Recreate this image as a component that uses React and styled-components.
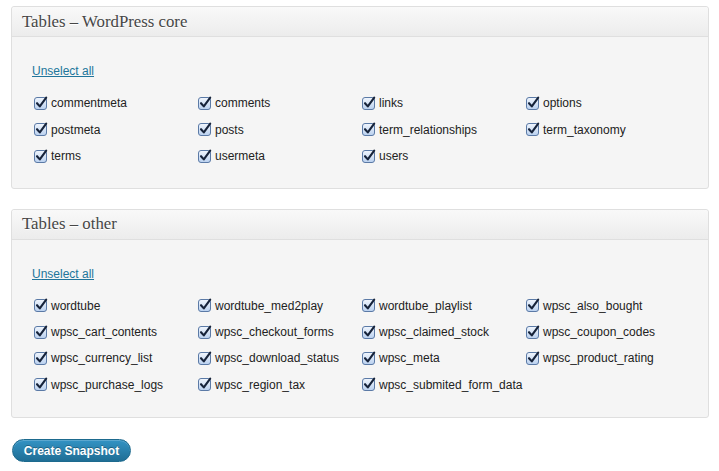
import React from "react";
import styled, { createGlobalStyle } from "styled-components";

const Global = createGlobalStyle`
  html, body { margin: 0; padding: 0; background: #ffffff; }
  body { font-family: "Liberation Sans", Arial, sans-serif; font-size: 12px; color: #333; }
`;

const Page = styled.div`
  padding: 6px 10px 0 11px;
  width: 719px;
  box-sizing: border-box;
`;

const Panel = styled.section`
  border: 1px solid #dfdfdf;
  border-radius: 3px;
  background: #f5f5f5;
  margin-bottom: 20px;
  box-shadow: inset 0 1px 0 #fff;
`;

const PanelHeader = styled.h3`
  margin: 0;
  height: 29px;
  display: flex;
  align-items: center;
  padding: 0 10px;
  border-bottom: 1px solid #dfdfdf;
  background: linear-gradient(to bottom, #f9f9f9, #ececec);
  border-radius: 3px 3px 0 0;
  font-family: "Liberation Serif", Georgia, serif;
  font-weight: normal;
  font-size: 16.8px;
  color: #464646;
  text-shadow: 0 1px 0 #fff;
`;

const PanelBody = styled.div`
  padding: ${(p) => p.$top}px 20px ${(p) => p.$bottom}px 20px;
`;

const Link = styled.a`
  display: block;
  line-height: 18px;
  color: #21759b;
  text-decoration: underline;
  font-size: 12px;
  width: max-content;
  cursor: pointer;
  margin-bottom: 10px;
`;

const Grid = styled.div`
  display: grid;
  grid-template-columns: repeat(4, 164px);
  grid-auto-rows: ${(p) => p.$row}px;
`;

const Item = styled.label`
  display: flex;
  align-items: center;
  gap: 3px;
  padding-left: 2px;
  font-size: 12px;
  color: #222;
  white-space: nowrap;
`;

const Box = styled.svg`
  width: 14px;
  height: 14px;
  flex: none;
  margin-top: -1px;
`;

const Check = () => (
  <Box viewBox="0 0 14 14">
    <defs>
      <linearGradient id="cbg" x1="0" y1="0" x2="0" y2="1">
        <stop offset="0" stopColor="#f1f6fd" />
        <stop offset="1" stopColor="#b9d0ef" />
      </linearGradient>
    </defs>
    <rect x="0.5" y="1.5" width="12" height="12" rx="2.5" fill="url(#cbg)" stroke="#5b7aa6" />
    <path d="M3 7.2 L5.8 10.4 L12.2 1.6" fill="none" stroke="#16233a" strokeWidth="2.1" strokeLinecap="round" strokeLinejoin="round" />
  </Box>
);

const Button = styled.button`
  margin: 1px 0 0 1px;
  height: 23px;
  width: 119px;
  padding: 0;
  border: 1px solid #1d6a8e;
  border-radius: 12px;
  background: linear-gradient(to bottom, #3393c4, #1f6e95);
  color: #fff;
  font-family: "Liberation Sans", Arial, sans-serif;
  font-weight: bold;
  font-size: 12px;
  text-shadow: 0 -1px 0 rgba(0, 0, 0, 0.3);
  box-shadow: inset 0 1px 0 rgba(255, 255, 255, 0.2);
  cursor: pointer;
`;

const core = [
  "commentmeta", "comments", "links", "options",
  "postmeta", "posts", "term_relationships", "term_taxonomy",
  "terms", "usermeta", "users",
];

const other = [
  "wordtube", "wordtube_med2play", "wordtube_playlist", "wpsc_also_bought",
  "wpsc_cart_contents", "wpsc_checkout_forms", "wpsc_claimed_stock", "wpsc_coupon_codes",
  "wpsc_currency_list", "wpsc_download_status", "wpsc_meta", "wpsc_product_rating",
  "wpsc_purchase_logs", "wpsc_region_tax", "wpsc_submited_form_data",
];

const TablePanel = ({ title, items, top, bottom, row }) => (
  <Panel>
    <PanelHeader>{title}</PanelHeader>
    <PanelBody $top={top} $bottom={bottom}>
      <Link>Unselect all</Link>
      <Grid $row={row}>
        {items.map((t) => (
          <Item key={t}>
            <Check />
            {t}
          </Item>
        ))}
      </Grid>
    </PanelBody>
  </Panel>
);

export default function App() {
  return (
    <>
      <Global />
      <Page>
        <TablePanel title="Tables – WordPress core" items={core} top={25} bottom={18} row={26.5} />
        <TablePanel title="Tables – other" items={other} top={25} bottom={19} row={26.4} />
        <Button>Create Snapshot</Button>
      </Page>
    </>
  );
}
